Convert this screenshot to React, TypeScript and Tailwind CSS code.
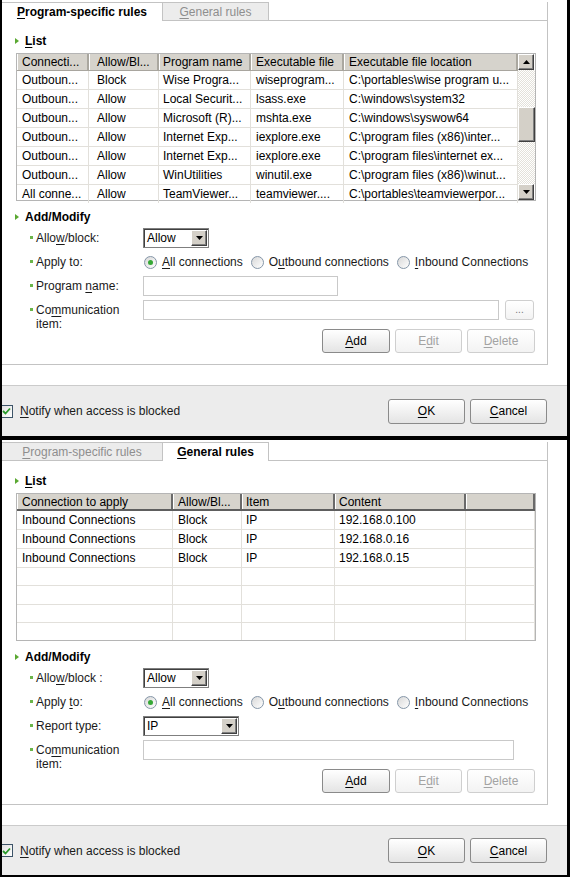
import React from "react";

// Two stacked firewall-rule dialogs (tabbed), classic Windows look.

const U = ({ children }: { children: React.ReactNode }) => (
  <span className="underline decoration-1 underline-offset-[2px]">{children}</span>
);

const SectionHead = ({ children }: { children: React.ReactNode }) => (
  <div className="flex items-center h-[14px] pl-[13px] gap-[6px]">
    <svg width="4" height="6" viewBox="0 0 4 6">
      <path d="M0 0L4 3L0 6Z" fill="#5aa832" />
    </svg>
    <span className="font-bold text-[12px] leading-[14px] text-black">{children}</span>
  </div>
);

const FieldLabel = ({ children, top }: { children: React.ReactNode; top?: boolean }) => (
  <div className={`w-[141px] shrink-0 flex items-start pl-[28px] gap-[3px] ${top ? "pt-[3px]" : ""}`}>
    <span className="w-[3px] h-[3px] mt-[5px] bg-[#6bb54a] shrink-0" />
    <span className="text-[12px] leading-[14px] text-[#1a1a1a]">{children}</span>
  </div>
);

const ArrowBox = ({ up }: { up?: boolean }) => (
  <span className="w-[16px] h-[16px] shrink-0 bg-[#d4d0c8] border border-t-white border-l-white border-r-[#404040] border-b-[#404040] shadow-[inset_-1px_-1px_0_#808080] flex items-center justify-center">
    <svg width="7" height="4" viewBox="0 0 7 4">
      {up ? <path d="M0 4h7L3.5 0z" fill="#000" /> : <path d="M0 0h7L3.5 4z" fill="#000" />}
    </svg>
  </span>
);

const Select = ({ value, className }: { value: string; className: string }) => (
  <div
    className={`${className} h-[20px] border border-[#7f7f7f] shadow-[inset_1px_1px_0_#404040] bg-white flex items-center pl-[3px] pr-[1px]`}
  >
    <span className="flex-1 text-[12px] text-black">{value}</span>
    <ArrowBox />
  </div>
);

const Input = ({ className }: { className: string }) => (
  <div className={`${className} h-[20px] border border-[#c9c9c9] bg-white`} />
);

const Radio = ({ checked, children }: { checked?: boolean; children: React.ReactNode }) => (
  <span className="flex items-center gap-[5px]">
    <span className="w-[13px] h-[13px] rounded-full border border-[#8596a8] bg-gradient-to-br from-[#d8d8d8] to-white flex items-center justify-center">
      {checked && <span className="w-[5px] h-[5px] rounded-full bg-[#35a835]" />}
    </span>
    <span className="text-[12px] text-[#1a1a1a]">{children}</span>
  </span>
);

const Btn = ({
  children,
  disabled,
  className,
}: {
  children: React.ReactNode;
  disabled?: boolean;
  className: string;
}) => (
  <div
    className={`${className} rounded-[3px] border flex items-center justify-center text-[12px] bg-gradient-to-b ${
      disabled
        ? "border-[#cfcfcf] text-[#a3a3a3] from-white to-[#f3f3f3]"
        : "border-[#8a8a8a] text-black from-white to-[#e4e4e4]"
    }`}
  >
    {children}
  </div>
);

const Tab = ({
  active,
  className,
  children,
}: {
  active?: boolean;
  className: string;
  children: React.ReactNode;
}) => (
  <div
    className={`${className} h-[19px] flex items-center justify-center text-[12px] border-t border-r border-[#c3c3c3] ${
      active ? "bg-white font-bold text-black" : "bg-[#ececec] text-[#8e8e8e] border-b"
    }`}
  >
    {children}
  </div>
);

const Scrollbar = () => (
  <div className="w-[17px] shrink-0 flex flex-col">
    <ArrowBox up />
    <div className="flex-1 flex flex-col bg-[repeating-conic-gradient(#e3e1da_0%_25%,#ffffff_0%_50%)] bg-[length:2px_2px]">
      <div className="h-[37px]" />
      <div className="h-[35px] bg-[#d4d0c8] border border-t-white border-l-white border-r-[#404040] border-b-[#404040] shadow-[inset_-1px_-1px_0_#808080]" />
      <div className="flex-1" />
    </div>
    <ArrowBox />
  </div>
);

type TableProps = {
  cols: string;
  pads: string[];
  headers: string[];
  rows: string[][];
  dark?: boolean;
  scroll?: boolean;
};

const Table = ({ cols, pads, headers, rows, dark, scroll }: TableProps) => {
  const filled = [...rows];
  while (filled.length < 7) filled.push(headers.map(() => ""));
  return (
    <div className="ml-[14px] w-[520px] h-[148px] border border-[#b5b5b5] bg-white flex">
      <div className="flex-1 flex flex-col">
        <div
          className={`grid ${cols} h-[17px] bg-[#d6d3cc] ${
            dark ? "border-b-2 border-[#5e5e5e]" : "border-b border-[#a8a59e]"
          }`}
        >
          {headers.map((h, i) => (
            <div
              key={i}
              className={`${pads[i]} flex items-center text-[12px] text-black whitespace-nowrap overflow-hidden border-r-2 ${
                dark ? "border-[#6a6a6a]" : "border-[#aaa79f]"
              } shadow-[inset_1px_0_0_#ffffff]`}
            >
              {h}
            </div>
          ))}
        </div>
        <div className="flex-1 flex flex-col">
          {filled.map((r, ri) => (
            <div
              key={ri}
              className={`grid ${cols} flex-1 ${ri < 6 ? "border-b border-[#e2e0db]" : ""}`}
            >
              {r.map((c, ci) => (
                <div
                  key={ci}
                  className={`${pads[ci]} flex items-center text-[12px] text-black whitespace-nowrap overflow-hidden border-r border-[#e2e0db]`}
                >
                  {c}
                </div>
              ))}
            </div>
          ))}
        </div>
      </div>
      {scroll && <Scrollbar />}
    </div>
  );
};

const Footer = ({ className }: { className: string }) => (
  <div className={`${className} border-t border-[#cbcbcb] bg-[#ececec] flex items-center pr-[20px]`}>
    <span className="ml-[-2px] w-[13px] h-[13px] border border-[#3d5468] bg-gradient-to-br from-[#e0e0e0] to-white flex items-center justify-center">
      <svg width="9" height="8" viewBox="0 0 9 8">
        <path d="M1 4L3.5 6.5L8 1.5" stroke="#2a9a2a" strokeWidth="1.8" fill="none" />
      </svg>
    </span>
    <span className="ml-[7px] text-[12px] text-[#1a1a1a]">
      <U>N</U>otify when access is blocked
    </span>
    <div className="flex-1" />
    <div className="flex gap-[5px]">
      <Btn className="w-[77px] h-[25px]">
        <U>O</U>K
      </Btn>
      <Btn className="w-[77px] h-[25px]">
        <U>C</U>ancel
      </Btn>
    </div>
  </div>
);

const ActionButtons = () => (
  <div className="flex justify-end gap-[5px] mt-[9px] pr-[12px]">
    <Btn className="w-[68px] h-[24px]">
      <U>A</U>dd
    </Btn>
    <Btn disabled className="w-[67px] h-[24px]">
      E<U>d</U>it
    </Btn>
    <Btn disabled className="w-[68px] h-[24px]">
      <U>D</U>elete
    </Btn>
  </div>
);

const ApplyRow = ({ underlineTo }: { underlineTo?: boolean }) => (
  <div className="flex h-[20px] items-center">
    <FieldLabel>
      Apply {underlineTo ? <U>t</U> : "t"}o:
    </FieldLabel>
    <div className="flex items-center gap-[8px] ml-[1px]">
      <Radio checked>
        <U>A</U>ll connections
      </Radio>
      <Radio>
        O<U>u</U>tbound connections
      </Radio>
      <Radio>
        <U>I</U>nbound Connections
      </Radio>
    </div>
  </div>
);

const CommLabel = () => (
  <FieldLabel top>
    Co<U>m</U>munication
    <br />
    item:
  </FieldLabel>
);

const programRows = [
  ["Outboun...", "Block", "Wise Progra...", "wiseprogram...", "C:\\portables\\wise program u..."],
  ["Outboun...", "Allow", "Local Securit...", "lsass.exe", "C:\\windows\\system32"],
  ["Outboun...", "Allow", "Microsoft (R)...", "mshta.exe", "C:\\windows\\syswow64"],
  ["Outboun...", "Allow", "Internet Exp...", "iexplore.exe", "C:\\program files (x86)\\inter..."],
  ["Outboun...", "Allow", "Internet Exp...", "iexplore.exe", "C:\\program files\\internet ex..."],
  ["Outboun...", "Allow", "WinUtilities", "winutil.exe", "C:\\program files (x86)\\winut..."],
  ["All conne...", "Allow", "TeamViewer...", "teamviewer....", "C:\\portables\\teamviewerpor..."],
];

const generalRows = [
  ["Inbound Connections", "Block", "IP", "192.168.0.100", ""],
  ["Inbound Connections", "Block", "IP", "192.168.0.16", ""],
  ["Inbound Connections", "Block", "IP", "192.168.0.15", ""],
];

const DialogShell = ({
  first,
  height,
  footer,
  children,
}: {
  first: boolean;
  height: string;
  footer: string;
  children: React.ReactNode;
}) => (
  <div className={`${height} bg-white flex flex-col overflow-hidden shrink-0`}>
    <div className="flex">
      <div className="w-[546px] flex flex-col">
        <div className="h-[21px] flex items-end">
          <Tab active={first} className="w-[161px]">
            <span>
              <U>P</U>rogram-specific rules
            </span>
          </Tab>
          <Tab active={!first} className="w-[106px]">
            <span>
              <U>G</U>eneral rules
            </span>
          </Tab>
          <div className="flex-1 h-[19px] border-b border-r border-[#c3c3c3]" />
        </div>
        <div className="h-[344px] border-r border-b border-[#c3c3c3] flex flex-col pt-[13px]">
          {children}
        </div>
      </div>
    </div>
    <div className="h-[20px]" />
    <Footer className={footer} />
  </div>
);

export default function App() {
  return (
    <div className="w-[570px] h-[877px] bg-black pl-[2px] pr-[3px] flex flex-col gap-[4px] overflow-hidden font-['Liberation_Sans',Arial,sans-serif]">
      <DialogShell first height="h-[436px]" footer="h-[51px]">
        <SectionHead>
          <U>L</U>ist
        </SectionHead>
        <div className="h-[5px]" />
        <Table
          cols="grid-cols-[72px_70px_92px_93px_174px]"
          pads={["pl-[5px]", "pl-[8px]", "pl-[4px]", "pl-[5px]", "pl-[5px]"]}
          headers={["Connecti...", "Allow/Bl...", "Program name", "Executable file", "Executable file location"]}
          rows={programRows}
          scroll
        />
        <div className="h-[9px]" />
        <SectionHead>Add/Modify</SectionHead>
        <div className="flex flex-col gap-[4px] mt-[4px]">
          <div className="flex h-[20px] items-center">
            <FieldLabel>
              Allo<U>w</U>/block:
            </FieldLabel>
            <Select value="Allow" className="w-[66px]" />
          </div>
          <ApplyRow />
          <div className="flex h-[20px] items-center">
            <FieldLabel>
              Program <U>n</U>ame:
            </FieldLabel>
            <Input className="w-[195px]" />
          </div>
          <div className="flex h-[20px] items-start">
            <CommLabel />
            <Input className="w-[356px]" />
            <Btn disabled className="ml-[6px] w-[29px] h-[20px]">
              <span className="text-[10px] text-[#777] leading-none">...</span>
            </Btn>
          </div>
        </div>
        <ActionButtons />
      </DialogShell>

      <DialogShell first={false} height="h-[435px]" footer="h-[50px]">
        <SectionHead>
          <U>L</U>ist
        </SectionHead>
        <div className="h-[5px]" />
        <Table
          cols="grid-cols-[156px_69px_93px_131px_69px]"
          pads={["pl-[5px]", "pl-[5px]", "pl-[4px]", "pl-[4px]", "pl-[4px]"]}
          headers={["Connection to apply", "Allow/Bl...", "Item", "Content", ""]}
          rows={generalRows}
          dark
        />
        <div className="h-[9px]" />
        <SectionHead>Add/Modify</SectionHead>
        <div className="flex flex-col gap-[4px] mt-[4px]">
          <div className="flex h-[20px] items-center">
            <FieldLabel>
              Allo<U>w</U>/block :
            </FieldLabel>
            <Select value="Allow" className="w-[66px]" />
          </div>
          <ApplyRow underlineTo />
          <div className="flex h-[20px] items-center">
            <FieldLabel>Report type:</FieldLabel>
            <Select value="IP" className="w-[96px]" />
          </div>
          <div className="flex h-[20px] items-start">
            <CommLabel />
            <Input className="w-[371px]" />
          </div>
        </div>
        <ActionButtons />
      </DialogShell>
    </div>
  );
}
